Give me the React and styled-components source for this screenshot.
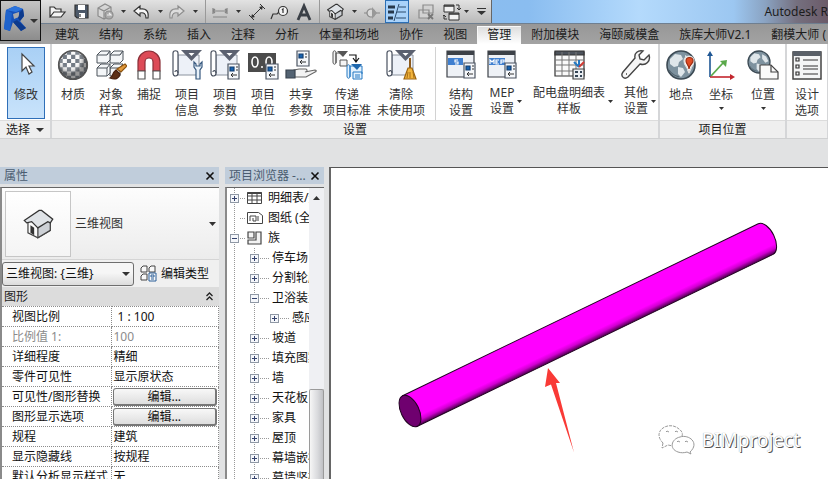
import React from "react";
import styled, { createGlobalStyle, css } from "styled-components";

const GlobalStyle = createGlobalStyle`
  *, *::before, *::after { box-sizing: border-box; }
  body {
    margin: 0;
    overflow: hidden;
    background: #e1e2e3;
    color: #1c1c1c;
    font: 12px/16px "Noto Sans", "Noto Sans CJK SC", sans-serif;
  }
  button, select {
    margin: 0;
    padding: 0;
    border: 0;
    background: none;
    color: inherit;
    font: inherit;
  }
  svg { display: block; flex: none; }
`;

/* ---------- shell ---------- */

const Window = styled.div`
  display: flex;
  flex-direction: column;
  height: 100vh;
  overflow: hidden;
`;

const Header = styled.header`
  display: flex;
  flex: none;
  background: #9b9b9b;
`;

const AppButton = styled.button`
  display: flex;
  align-items: center;
  justify-content: center;
  gap: 2px;
  flex: none;
  width: 41px;
  height: 41px;
  border: 1px solid #111;
  background: linear-gradient(#c4c4c4, #8c8c8c);
`;

const HeaderRows = styled.div`
  flex: 1;
  min-width: 0;
`;

const TitleBar = styled.div`
  display: flex;
  height: 24px;
  border-bottom: 1px solid #6f7f90;
  background: linear-gradient(90deg, #8cbce9 0, #8abdf0 62%, #b4dafc 76%, #9cc7f1 88%, #8aa3c2 92%, #75707f 96%, #6b5a68 100%);
`;

const QuickAccess = styled.div`
  display: flex;
  flex: none;
  padding-left: 4px;
  border-right: 1px solid #666;
  background: linear-gradient(#e2e2e2, #b9b9b9);
`;

const QuickButton = styled.button`
  display: flex;
  align-items: center;
  justify-content: center;
  flex: none;
  width: ${(p) => p.$w}px;
  ${(p) =>
    p.$active &&
    css`
      border: 1px solid #2c6fb5;
      background: #a9d2fa;
    `}
`;

const QuickSeparator = styled.span`
  flex: none;
  width: ${(p) => p.$w}px;
  background: linear-gradient(#999, #999) center / 1px 100% no-repeat;
`;

const AppTitle = styled.div`
  flex: 1;
  padding: 4px 0 0;
  text-align: right;
  white-space: nowrap;
`;

const TabBar = styled.nav`
  display: flex;
  height: 20px;
  padding: 2px 0 0 4px;
  overflow: hidden;
  background: linear-gradient(#979797, #a3a3a3);
`;

const Tab = styled.button`
  flex: none;
  height: 18px;
  padding: 0 10px;
  line-height: 18px;
  white-space: nowrap;
  ${(p) =>
    p.$active &&
    css`
      background: linear-gradient(#dcdcdc, #fff);
      box-shadow: inset 1px 1px #f8f8f8;
    `}
`;

/* ---------- ribbon ---------- */

const Ribbon = styled.section`
  display: flex;
  flex: none;
  overflow: hidden;
  border-bottom: 1px solid #cfd0d1;
  background: #fff;
`;

const RibbonPanel = styled.section`
  display: flex;
  flex-direction: column;
  flex: none;
  border-right: 2px solid #d5d6d8;
`;

const RibbonTools = styled.div`
  display: flex;
  height: 76px;
  padding: 3px ${(p) => p.$end || 0}px 0 ${(p) => p.$start || 0}px;
`;

const RibbonFooter = styled.div`
  display: flex;
  align-items: center;
  justify-content: center;
  gap: 6px;
  height: 18px;
  border-top: 1px solid #dcdcdc;
  background: #efefef;
`;

const Tool = styled.button`
  display: flex;
  flex-direction: column;
  align-items: center;
  flex: none;
  width: ${(p) => p.$w || 38}px;
  height: 72px;
  padding-top: 2px;
  white-space: nowrap;
  color: #333;
  ${(p) =>
    p.$active &&
    css`
      border: 1px solid #2f6fb8;
      background: linear-gradient(#a9d0f5, #c9e3fb);
      padding-top: 1px;
    `}
`;

const ToolLabel = styled.span`
  display: flex;
  align-items: center;
  gap: 3px;
  padding: ${(p) => (p.$side ? "4px 0 0 8px" : "6px 0 0")};
  text-align: center;
`;

const ToolCaret = styled.span`
  padding-top: 4px;
`;

const ToolDivider = styled.span`
  flex: none;
  width: 14px;
  background: linear-gradient(#d2d2d2, #d2d2d2) center / 1px 100% no-repeat;
`;

/* ---------- work area ---------- */

const WorkArea = styled.main`
  display: flex;
  flex: 1;
  min-height: 0;
  padding-top: 28px;
`;

const Palette = styled.section`
  display: flex;
  flex-direction: column;
  flex: none;
  width: ${(p) => p.$w}px;
  margin-right: ${(p) => p.$gap}px;
`;

const PaletteHeader = styled.header`
  display: flex;
  align-items: center;
  justify-content: space-between;
  flex: none;
  height: 17px;
  margin-bottom: 3px;
  padding: 0 4px;
  background: #c0cddb;
  color: #4b5c70;
  white-space: nowrap;
`;

const PaletteBody = styled.div`
  display: flex;
  flex-direction: ${(p) => (p.$row ? "row" : "column")};
  flex: 1;
  min-height: 0;
  overflow: hidden;
  border-top: 1px solid #666;
  border-left: 2px solid #8a8a8a;
  background: ${(p) => (p.$row ? "#fff" : "#f0f0f0")};
`;

const TypeSelector = styled.button`
  display: flex;
  align-items: center;
  gap: 4px;
  flex: none;
  height: 72px;
  padding: 3px;
  border-bottom: 1px solid #d5d5d5;
  background: linear-gradient(#fdfdfd, #ececec);
  color: #333;
  text-align: left;
`;

const TypePreview = styled.span`
  display: flex;
  align-items: center;
  justify-content: center;
  width: 66px;
  height: 66px;
  border: 1px solid #c6c6c6;
  background: linear-gradient(#fff, #f4f4f4);
`;

const TypeName = styled.span`
  flex: 1;
`;

const InstanceRow = styled.div`
  display: flex;
  align-items: center;
  flex: none;
  height: 27px;
  gap: 6px;
`;

const SelectBox = styled.label`
  display: grid;
  align-items: center;
  width: 132px;

  > * { grid-area: 1 / 1; }
  > svg { justify-self: end; margin-right: 4px; pointer-events: none; }
`;

const InstanceSelect = styled.select`
  appearance: none;
  width: 100%;
  height: 24px;
  padding: 0 16px 0 3px;
  border: 1px solid #6e6e6e;
  border-radius: 3px;
  background: linear-gradient(#f6f6f6 45%, #dcdcdc);
  color: #111;
`;

const EditType = styled.button`
  display: flex;
  align-items: center;
  gap: 4px;
  color: #111;
`;

const GroupHeader = styled.button`
  display: flex;
  align-items: center;
  justify-content: space-between;
  flex: none;
  height: 19px;
  padding: 0 6px 0 2px;
  background: #dcdcdc;
`;

const PropertyTable = styled.table`
  flex: none;
  width: 100%;
  table-layout: fixed;
  border-collapse: collapse;
  background: #fff;
  color: #111;
`;

const PropertyRow = styled.tr`
  height: 20px;
  color: ${(p) => (p.$disabled ? "#8b8b8b" : "inherit")};
`;

const PropertyName = styled.th`
  width: 109px;
  padding: 0 0 0 10px;
  border: 1px dotted #8c8c8c;
  border-left: 0;
  font-weight: 400;
  line-height: 18px;
  text-align: left;
  white-space: nowrap;
`;

const PropertyValue = styled.td`
  padding: 0 1px 0 ${(p) => (p.$button ? 1 : p.$scale ? 6 : 2)}px;
  border: 1px dotted #8c8c8c;
  line-height: 18px;
  white-space: nowrap;
`;

const EditButton = styled.button`
  display: block;
  width: 100%;
  height: 18px;
  border: 1px solid #777;
  border-right-width: 2px;
  border-bottom-width: 2px;
  border-radius: 3px;
  background: linear-gradient(#f8f8f8, #dedede);
  line-height: 15px;
`;

/* ---------- project browser ---------- */

const Tree = styled.ul`
  flex: 1;
  min-width: 0;
  margin: 0;
  padding: 0;
  overflow: hidden;
  list-style: none;
`;

const TreeRow = styled.li`
  display: flex;
  align-items: center;
  height: 20px;
  white-space: nowrap;
  color: #111;
`;

const TreeCell = styled.span`
  display: flex;
  align-items: center;
  flex: none;
  width: ${(p) => (p.$last ? 12 : 20)}px;
  height: 20px;
  padding-left: 3px;
  background: ${(p) =>
    p.$line ? "repeating-linear-gradient(#999 0 1px, transparent 1px 2px) 7px 0 / 1px 100% no-repeat" : "none"};
`;

const Expander = styled.button`
  display: flex;
  align-items: center;
  justify-content: center;
  flex: none;
  width: 9px;
  height: 9px;
  border: 1px solid #8f98a5;
  background: #f5f7fb;
`;

const TreeLead = styled.span`
  display: flex;
  align-items: center;
  flex: none;
  width: ${(p) => (p.$icon ? 29 : 13)}px;
  height: 20px;
  padding-left: 8px;
  background: repeating-linear-gradient(90deg, transparent 0 1px, #999 1px 2px) 0 center /
    ${(p) => (p.$icon ? 6 : 10)}px 1px no-repeat;
`;

const ScrollTrack = styled.div`
  display: flex;
  flex-direction: column;
  flex: none;
  width: 15px;
  background: #eff0f3;
`;

const ScrollUp = styled.button`
  display: flex;
  align-items: center;
  justify-content: center;
  height: 20px;
`;

const ScrollSpace = styled.div`
  flex: 67;
`;

const ScrollThumb = styled.div`
  flex: 33;
  border: 1px solid #9a9a9a;
  border-bottom: 0;
  border-radius: 2px 2px 0 0;
  background: linear-gradient(90deg, #f6f6f6, #d8d9dc 60%, #bfc0c4);
`;

/* ---------- 3D view ---------- */

const Viewport = styled.section`
  position: relative;
  flex: 1;
  min-width: 0;
  border-top: 1px solid #555;
  border-left: 2px solid #666;
  background: #fff;

  > svg { width: 100%; height: 100%; }
`;

const Watermark = styled.div`
  position: absolute;
  right: 28px;
  bottom: 23px;
  display: flex;
  align-items: center;
  gap: 7px;
  color: #fff;
  font-size: 19px;
  line-height: 32px;
  text-shadow: 1px 1px 0 #555, 0 0 1px #888;
`;

/* ---------- small glyphs ---------- */

const Caret = ({ size = 7, up }) => (
  <svg width={size} height={size > 5 ? 4 : 3} viewBox="0 0 8 4" preserveAspectRatio="none" aria-hidden="true">
    <path d={up ? "M0 4h8L4 0z" : "M0 0h8L4 4z"} fill="#333" />
  </svg>
);

const Close = () => (
  <button aria-label="关闭">
    <svg width="10" height="10" viewBox="0 0 10 10">
      <path d="M1.5 1.5l7 7M8.500 1.5l-7 7" stroke="#111" strokeWidth="1.6" />
    </svg>
  </button>
);

const Icon = ({ s = 20, children }) => (
  <svg width={s} height={s} viewBox={`0 0 ${s} ${s}`} fill="none" stroke="#333" strokeWidth="1.2" aria-hidden="true">
    {children}
  </svg>
);

const Logo = () => (
  <svg width="24" height="29" viewBox="0 0 24 29" aria-hidden="true">
    <path d="M2 4L11 0l8 3 1 7-4 5 6 7-5 3-8-9-3 9-6-2z" fill="#1650b8" />
    <path d="M2 4l9-4 8 3-7 3z" fill="#2c74dc" />
    <path d="M9 8l6-2v5l-5 2z" fill="#a9a9ab" />
    <path d="M2 4l6 3-2 18-6-2z" fill="#1f63cc" />
    <path d="M19 3l1 7-4 5-2-3 2-6zM13 14l9 8-5 3-8-9z" fill="#0d3a8c" />
  </svg>
);

const HouseShape = () => (
  <>
    <path d="M4 11v9l8 4 10-6v-8l-7-6z" fill="#fafafa" stroke="#444" />
    <path d="M12 14v10l10-6v-8z" fill="#cdd1d6" stroke="#444" />
    <path d="M1 10L13 2h2l9 7-2 3-2-1-8 5-5-5-4 1z" fill="#dfe3e7" stroke="#333" />
    <path d="M6 14v6l3 2v-6z" fill="#333" stroke="none" />
  </>
);

/* ---------- quick access icons ---------- */

const quick = {
  folder: (
    <Icon>
      <path d="M3 15V5h4l2 2h5v3M3 15l4-5h11l-4 5z" fill="#f4f4f4" />
    </Icon>
  ),
  save: (
    <Icon>
      <path d="M3 3h13v13H5l-2-2z" fill="#4c5868" />
      <path d="M6 3h7v5H6zM7 11h6v5H7z" fill="#fff" stroke="none" />
      <path d="M8 12v3" />
    </Icon>
  ),
  sync: (
    <Icon>
      <g stroke="#8b8b8b" fill="#d6d6d6">
        <path d="M2 6l7-4 6 3v8l-7 4-6-3zM2 6l6 3 7-4M8 9v8" />
        <circle cx="13" cy="13" r="4" fill="#aaa" />
        <path d="M11 13h4l-2-2" fill="none" stroke="#eee" />
      </g>
    </Icon>
  ),
  undo: (
    <Icon>
      <path d="M2 9l6-5v3c6-1 9 2 8 9h-2c0-4-2-6-6-5v3z" fill="#f7f7f7" />
    </Icon>
  ),
  redo: (
    <Icon>
      <path d="M17 9l-6-5v3c-6-1-9 2-8 9h2c0-4 2-6 6-5v3z" fill="#ddd" stroke="#8d8d8d" />
    </Icon>
  ),
  measure: (
    <Icon>
      <path d="M3 9h14M3 6v6M17 6v6M5 7L3 9l2 2M15 7l2 2-2 2M3 15h14" stroke="#858585" />
    </Icon>
  ),
  dimension: (
    <Icon>
      <path d="M5 15L15 5M2 13l5 5M13 2l5 5" strokeWidth="1" />
      <path d="M4 16l1-4 3 3zM16 4l-1 4-3-3z" fill="#333" stroke="none" />
    </Icon>
  ),
  tag: (
    <Icon>
      <path d="M1 17l2-5h4l2-2" />
      <circle cx="13" cy="9" r="4.500" fill="#f3f3f3" />
      <path d="M12 8l1-1v4" />
    </Icon>
  ),
  text: (
    <Icon>
      <path d="M4 18L10 4l6 14M6 13h8" stroke="#3a3f46" strokeWidth="2.800" />
    </Icon>
  ),
  house: (
    <svg width="17" height="17" viewBox="0 0 25 25" fill="none" strokeWidth="1.6" aria-hidden="true">
      <HouseShape />
    </svg>
  ),
  section: (
    <Icon>
      <path d="M2 11h4M14 11h4" stroke="#888" />
      <circle cx="9" cy="11" r="4" fill="#d9d9d9" stroke="#888" />
      <path d="M10 5l5 6-5 6z" fill="#999" stroke="none" />
    </Icon>
  ),
  thin: (
    <Icon>
      <path d="M1 5h7M1 10h6M1 16h5" strokeWidth="3" stroke="#27384c" />
      <path d="M12 5h7M10 10h9M9 16h10M12 2L7 19" stroke="#2a4a6c" strokeWidth="1" />
    </Icon>
  ),
  hidden: (
    <Icon>
      <path d="M7 3h10v8H7zM3 8h10v8H3z" fill="#d2d2d2" stroke="#8b8b8b" />
      <path d="M12 12l5 5M17 12l-5 5" stroke="#777" strokeWidth="1.8" />
    </Icon>
  ),
  windows: (
    <Icon>
      <path d="M2 3h10v7H2zM7 11h10v7H7z" fill="#f2f2f2" strokeWidth="1" />
      <path d="M2 4h10M7 12h10" strokeWidth="1.6" />
      <path d="M14 3h3v5M15 6l2 2 2-2M5 17H2v-4M1 14l1-1 2 2" strokeWidth="1" />
    </Icon>
  ),
  customize: (
    <svg width="9" height="7" viewBox="0 0 9 7" aria-hidden="true">
      <path d="M0 0h9v1H0zM0 3h9L4.500 7z" fill="#333" />
    </svg>
  ),
};

const quickItems = [
  ["folder", 24, "打开"],
  ["save", 26, "保存"],
  ["sync", 22, "同步"],
  ["caret", 12, "同步选项"],
  ["undo", 26, "放弃"],
  ["caret", 10, "放弃列表"],
  ["redo", 24, "重做"],
  ["caret", 12, "重做列表"],
  ["sep", 8],
  ["measure", 22, "测量"],
  ["caret", 14, "测量选项"],
  ["dimension", 24, "对齐尺寸标注"],
  ["tag", 22, "按类别标记"],
  ["text", 26, "文字"],
  ["sep", 4],
  ["house", 28, "默认三维视图"],
  ["caret", 10, "三维视图选项"],
  ["section", 26, "剖面"],
  ["thin", 24, "细线"],
  ["hidden", 34, "关闭隐藏窗口"],
  ["windows", 18, "切换窗口"],
  ["caret", 10, "窗口列表"],
  ["customize", 20, "自定义快速访问工具栏"],
];

/* ---------- ribbon icons ---------- */

const Scroll = () => (
  <>
    <path d="M7 6h21v20H7z" fill="#edf1f8" stroke="#8a929e" strokeWidth="1" />
    <path d="M2 4c0-3 5-3 5 0v20c0 4-5 4-5 0z" fill="#fff" stroke="#4a5260" />
    <path d="M7 24c0-3-3-3-3-1" stroke="#4a5260" />
    <path d="M10 1h21L20.500 12z" fill="#5b6170" stroke="none" />
    <path d="M17.500 4h6l-3 3z" fill="#fff" stroke="none" />
  </>
);

const Card = ({ x = 19, y = 15, w = 11, h = 15 }) => (
  <g transform={`translate(${x} ${y})`}>
    <path d={`M0 0h${w}v${h}H0z`} fill="#f5f7fa" stroke="#4c5563" />
    <path d="M2 3h4v4H2z" fill="#1662b0" stroke="#143f70" />
    <path d="M8 3h2M8 6h2" stroke="#333" />
    <path d="M3 11h6M5 9l-2 2 2 2" stroke="#333" strokeWidth="1" />
  </g>
);

const Globe = ({ cx = 16, cy = 16, r = 14 }) => (
  <g transform={`translate(${cx} ${cy}) scale(${r / 14})`}>
    <circle r="14" fill="#7e929f" stroke="#3c4a54" strokeWidth="1.6" />
    <path d="M-11-6l5-5 6 1 2 4-4 3-1 4-4 1-4-3zM-3 2l5 1 2 4-4 5-3-3zM4-10l5 3 3 6-4 2-4-5zM6 5l5-2-3 6z" fill="#dfe6ea" stroke="none" />
    <path d="M-12 5c4 6 8 6 10 7" stroke="#52646f" />
  </g>
);

const checks = [];
for (let r = 0; r < 7; r += 1) {
  for (let c = 0; c < 7; c += 1) {
    if ((r + c) % 2 === 0) checks.push(`M${1.5 + c * 4.2} ${1.5 + r * 4.2}h4.200v4.200h-4.200z`);
  }
}

const Grid = () => (
  <>
    <path d="M2 3h29v24H2z" fill="#fafafa" />
    <path d="M2 2h29v4H2z" fill="#4c525b" />
    <path d="M2 11h29M2 16h29M2 22h29M9 3v24M16 3v24M23 3v24" stroke="#777" strokeWidth="1" />
  </>
);

const ViewWindow = ({ w, children }) => (
  <>
    <path d="M2 2h27v26H2z" fill="#eef1f6" stroke="#3c4148" />
    <path d="M2 2h27v4H2z" fill="#3c4148" stroke="none" />
    <path d={`M3 9h${w}v7H3z`} fill="#3f7fd0" stroke="none" />
    <g stroke="#fff" strokeWidth="1.2">{children}</g>
    <Card x={19} y={14} w={11} h={15} />
  </>
);

const tool = {
  modify: <path d="M12 5v17l4-4 3 7 3-2-3-6h5z" fill="#fff" stroke="#444" />,
  material: (
    <>
      <defs>
        <clipPath id="ball"><circle cx="16" cy="16" r="14" /></clipPath>
        <radialGradient id="shade" cx=".4" cy=".3"><stop offset=".5" stopColor="#fff" stopOpacity="0" /><stop offset="1" stopColor="#333" stopOpacity=".5" /></radialGradient>
      </defs>
      <circle cx="16" cy="16" r="14" fill="#fafafa" />
      <g clipPath="url(#ball)"><path d={checks.join("")} fill="#737b85" stroke="none" /></g>
      <circle cx="16" cy="16" r="14.500" fill="url(#shade)" stroke="#555" />
    </>
  ),
  styles: (
    <>
      <g fill="#f4f6f8" stroke="#4b525b" strokeWidth="1">
        <path d="M2 6l4-4h9l-3 4v8H2zM15 6l4-4h9l-3 4v8H15z" />
        <path d="M2 19l4-4h9l-3 4v8H2zM15 19l4-4h9l-3 4v8H15z" />
        <path d="M2 6h10l3-4v9l-3 3M15 6h10l3-4v9l-3 3M2 19h10M12 27l3-3v-9M15 19h10" />
      </g>
      <path d="M30 15l2 2-6 6-4-3z" fill="#e29a3c" stroke="#8c5310" />
      <path d="M21 21l4 4c-1 5-5 6-10 4 3-1 2-5 6-8z" fill="#5d2f17" stroke="#472010" />
    </>
  ),
  snap: (
    <>
      <path d="M5 22V13a11 11 0 0122 0v9h-7v-9a4 4 0 00-8 0v9z" fill="#dd4b57" stroke="#8a2f38" />
      <path d="M5 22h7v8H5zM20 22h7v8h-7z" fill="#fff" stroke="#555" />
    </>
  ),
  info: (
    <>
      <Scroll />
      <path d="M23 13v5l2 3v9h4v-9l2-3v-5l-2 2v2h-4v-2z" fill="#e9f2fb" stroke="#36587e" />
    </>
  ),
  params: (<><Scroll /><Card /></>),
  units: (
    <>
      <path d="M1 4h28v19H1z" fill="#4b4b4b" stroke="none" />
      <g stroke="#fff" strokeWidth="1.6"><ellipse cx="8" cy="13" rx="3" ry="5" /><path d="M14 18h2" /><ellipse cx="22" cy="13" rx="3" ry="5" /></g>
      <Card x={19} y={15} w={12} h={15} />
    </>
  ),
  shared: (
    <>
      <Card x={12} y={2} w={12} h={15} />
      <path d="M9 21l5-1h7c2 1 1 3-1 3l10-2c2 0 1 2 0 2l-9 5H9z" fill="#f3f3f3" stroke="#666" />
      <path d="M1 21h9v8H1z" fill="#536272" stroke="#39434f" />
    </>
  ),
  transfer: (
    <>
      <path d="M2 4c0-3 3-3 3 0v9c0 3-3 3-3 0zM5 14V4h10M9 11h7v6H9z" fill="#f4f4f4" stroke="#555" strokeWidth="1" />
      <path d="M6 2h11l-5 6z" fill="#555" stroke="none" />
      <path d="M18 6h7v6M22 9l3 4 3-4" stroke="#111" />
      <g stroke="#2478c2" fill="#e3f1fd" strokeWidth="1"><path d="M16 18c0-3 3-3 3 0v9c0 3-3 3-3 0zM19 28V17h12v8M22 23h9v7h-9z" /><path d="M24 26h5M24 28h5" /></g>
      <path d="M20 15h11l-5 6z" fill="#1d66ad" stroke="none" />
    </>
  ),
  purge: (
    <>
      <Scroll />
      <path d="M25 9v10" stroke="#8b5a1e" strokeWidth="2" />
      <path d="M23 19h4l4 11H19z" fill="#f2b53c" stroke="#9c6512" />
      <path d="M23 23l-1 6M25 23v6M28 23l1 6" stroke="#a96f17" strokeWidth="1" />
    </>
  ),
  structure: <ViewWindow w={15}><path d="M13 11h-3v2h3v2h-3" /></ViewWindow>,
  mep: <ViewWindow w={16}><path d="M4 15v-4l2 2 2-2v4M13 11h-3v4h3M10 13h2M15 15v-4h3v2h-3" /></ViewWindow>,
  schedule: (
    <>
      <Grid />
      <path d="M21 13l5 5M26 11v7" stroke="#2478c2" strokeWidth="2" />
      <path d="M31 13l-5 5" stroke="#d23b35" strokeWidth="2" />
      <path d="M20 20h11v10H20z" fill="#eceff3" stroke="#444" />
      <path d="M22 22h3v2h-3zM27 22h2v2h-2zM22 26h3v2h-3zM27 26h2v2h-2z" fill="#345" stroke="none" />
    </>
  ),
  wrench: (
    <path d="M29 6l-5 5-4-1-1-4 4-4c-5-1-9 2-8 7L3 23c-3 4 1 8 5 5l12-13c6 2 11-3 9-9zM6 25h1" fill="#f5f5f5" stroke="#444" strokeWidth="1.4" />
  ),
  place: (
    <>
      <Globe />
      <path d="M24 24c-1-6-5-7-5-12a5 5 0 0110 0c0 5-4 6-5 12z" fill="#fff" stroke="#ddd" />
      <path d="M24 20c0-4-3-5-3-8a3.500 3.500 0 017 0c0 3-4 4-4 8z" fill="#e14c25" stroke="#9d2e13" />
    </>
  ),
  axes: (
    <>
      <path d="M5 28V5" stroke="#1f5794" strokeWidth="1.600" /><path d="M2 7l3-5 3 5z" fill="#1f5794" stroke="none" />
      <path d="M5 28h22" stroke="#c3262d" strokeWidth="1.600" /><path d="M25 25l5 3-5 3z" fill="#c3262d" stroke="none" />
      <path d="M6 27l12-13" stroke="#5ba94b" strokeWidth="1.800" /><path d="M15 12l7-1-1 7z" fill="#5ba94b" stroke="none" />
    </>
  ),
  position: (
    <>
      <Globe cx={12} cy={13} r={11} />
      <path d="M13 16h11l7 7v7H13z" fill="#fafafa" stroke="#444" />
      <path d="M24 16v7h7" stroke="#444" />
    </>
  ),
  options: (
    <>
      <path d="M2 3h28v27H2z" fill="#f4f5f6" stroke="#444" strokeWidth="1.500" />
      <path d="M2 2h28v5H2z" fill="#5a6068" stroke="none" />
      <path d="M5 9h3v3H5zM5 16h3v3H5zM5 23h3v3H5z" />
      <path d="M12 11h15M12 17h15M12 20h15M12 25h15" />
    </>
  ),
};

const settingsTools = [
  { icon: "material", lines: ["材质"] },
  { icon: "styles", lines: ["对象", "样式"] },
  { icon: "snap", lines: ["捕捉"] },
  { icon: "info", lines: ["项目", "信息"] },
  { icon: "params", lines: ["项目", "参数"] },
  { icon: "units", lines: ["项目", "单位"] },
  { icon: "shared", lines: ["共享", "参数"] },
  { icon: "transfer", lines: ["传递", "项目标准"], w: 54 },
  { icon: "purge", lines: ["清除", "未使用项"], w: 54 },
  { divider: true },
  { icon: "structure", lines: ["结构", "设置"] },
  { icon: "mep", lines: ["MEP", "设置"], w: 44, caret: "side" },
  { icon: "schedule", lines: ["配电盘明细表", "样板"], w: 90, caret: "side" },
  { icon: "wrench", lines: ["其他", "设置"], w: 44, caret: "side" },
];

const locationTools = [
  { icon: "place", lines: ["地点"], w: 40 },
  { icon: "axes", lines: ["坐标"], w: 40, caret: "below" },
  { icon: "position", lines: ["位置"], w: 44, caret: "below" },
];

const RibbonTool = ({ icon, lines, w, caret, active }) => (
  <Tool $w={w} $active={active}>
    <Icon s={32}>{tool[icon]}</Icon>
    <ToolLabel $side={caret === "side"}>
      <span>
        {lines.map((line, i) => (
          <React.Fragment key={line}>
            {i > 0 && <br />}
            {line}
          </React.Fragment>
        ))}
      </span>
      {caret === "side" && <Caret size={5} />}
    </ToolLabel>
    {caret === "below" && <ToolCaret><Caret size={5} /></ToolCaret>}
  </Tool>
);

/* ---------- data ---------- */

const tabs = ["建筑", "结构", "系统", "插入", "注释", "分析", "体量和场地", "协作", "视图", "管理", "附加模块", "海颐威模盒", "族库大师V2.1", "翻模大师 ("];

const properties = [
  { name: "视图比例", value: "1 : 100", scale: true },
  { name: "比例值 1:", value: "100", disabled: true },
  { name: "详细程度", value: "精细" },
  { name: "零件可见性", value: "显示原状态" },
  { name: "可见性/图形替换", button: "编辑..." },
  { name: "图形显示选项", button: "编辑..." },
  { name: "规程", value: "建筑" },
  { name: "显示隐藏线", value: "按规程" },
  { name: "默认分析显示样式", value: "无" },
];

const treeIcons = {
  schedule: (
    <svg width="16" height="14" viewBox="0 0 16 14" fill="#fff" stroke="#444" aria-hidden="true">
      <path d="M.5 1.500h14v11H.5zM.5 5h14M.5 9h14M5 1v11M10 1v11" />
      <path d="M.5 2h14" strokeWidth="2" />
    </svg>
  ),
  sheet: (
    <svg width="16" height="14" viewBox="0 0 16 14" fill="#fff" stroke="#444" aria-hidden="true">
      <path d="M.5 1.500h11l4 3v8H.5z" />
      <path d="M3 10V5h6v5H6V7M11 5v5" />
    </svg>
  ),
  family: (
    <svg width="16" height="14" viewBox="0 0 16 14" fill="#f3f3f3" stroke="#444" strokeWidth="1.200" aria-hidden="true">
      <path d="M1 1h6v6H1zM9 1h5v12H1V9h8z" />
    </svg>
  ),
};

const treeItems = [
  { level: 0, state: "+", icon: "schedule", label: "明细表/数量" },
  { level: 0, icon: "sheet", label: "图纸 (全部)" },
  { level: 0, state: "-", icon: "family", label: "族" },
  { level: 1, state: "+", label: "停车场" },
  { level: 1, state: "+", label: "分割轮廓" },
  { level: 1, state: "-", label: "卫浴装置" },
  { level: 2, state: "+", label: "感应" },
  { level: 1, state: "+", label: "坡道" },
  { level: 1, state: "+", label: "填充图案" },
  { level: 1, state: "+", label: "墙" },
  { level: 1, state: "+", label: "天花板" },
  { level: 1, state: "+", label: "家具" },
  { level: 1, state: "+", label: "屋顶" },
  { level: 1, state: "+", label: "幕墙嵌板" },
  { level: 1, state: "+", label: "幕墙竖梃" },
];

const TreeItem = ({ level, state, icon, label }) => (
  <TreeRow>
    {Array.from({ length: level }, (_, i) => <TreeCell key={i} $line />)}
    <TreeCell $line={level < 2} $last>
      {state && (
        <Expander aria-label={`${state === "+" ? "展开" : "折叠"} ${label}`}>
          <svg width="5" height="5" viewBox="0 0 5 5">
            <path d={state === "+" ? "M0 2h5v1H0zM2 0h1v5H2z" : "M0 2h5v1H0z"} fill="#33406b" />
          </svg>
        </Expander>
      )}
    </TreeCell>
    <TreeLead $icon={icon}>{icon && treeIcons[icon]}</TreeLead>
    {label}
  </TreeRow>
);

const Pipe = () => (
  <svg viewBox="331 168 497 311" role="img" aria-label="三维管道">
    <defs>
      <linearGradient id="pipe" x1="0" y1="0" x2="0" y2="1">
        <stop offset=".74" stopColor="#ff00ff" />
        <stop offset=".86" stopColor="#d000d0" />
        <stop offset="1" stopColor="#480048" />
      </linearGradient>
    </defs>
    <g transform="translate(410 411) rotate(-25.800)" stroke="#200020" strokeWidth="1">
      <path d="M0-17H395A9 17 0 01395 17H0z" fill="url(#pipe)" />
      <ellipse rx="9" ry="17" fill="#6f006f" />
    </g>
    <path d="M548 368l12 15-4 0 18 69.500-23-68-6 2.500z" fill="#f93a36" />
  </svg>
);

const ChatLogo = () => (
  <svg width="37" height="32" viewBox="0 0 37 32" fill="#fff" stroke="#999" aria-hidden="true">
    <path d="M5 19C-7 7 11-4 21 5c3 2 4 5 3 7M5 19l-1 5 6-3 5 1" strokeDasharray="3 1" />
    <path d="M32 28c10-9-1-18-10-15-9 2-11 12-2 15 3 1 6 1 9 0l4 2z" />
    <path d="M8 8l1-1 2 1M17 8l1-1 2 1M19 18l1-1 2 1M27 18l1-1 2 1" />
  </svg>
);

export default function App() {
  return (
    <Window>
      <GlobalStyle />
      <Header>
        <AppButton aria-label="应用程序菜单">
          <Logo />
          <Caret size={8} />
        </AppButton>
        <HeaderRows>
          <TitleBar>
            <QuickAccess>
              {quickItems.map(([kind, w, label], i) =>
                kind === "sep" ? (
                  <QuickSeparator key={i} $w={w} />
                ) : (
                  <QuickButton key={i} $w={w} $active={kind === "thin"} aria-label={label}>
                    {kind === "caret" ? <Caret size={5} /> : quick[kind]}
                  </QuickButton>
                )
              )}
            </QuickAccess>
            <AppTitle>Autodesk R</AppTitle>
          </TitleBar>
          <TabBar>
            {tabs.map((t) => <Tab key={t} $active={t === "管理"}>{t}</Tab>)}
          </TabBar>
        </HeaderRows>
      </Header>

      <Ribbon>
        <RibbonPanel>
          <RibbonTools $start={7} $end={5}>
            <RibbonTool icon="modify" lines={["修改"]} active />
          </RibbonTools>
          <RibbonFooter>选择 <Caret size={8} /></RibbonFooter>
        </RibbonPanel>
        <RibbonPanel>
          <RibbonTools $start={2}>
            {settingsTools.map((t, i) => (t.divider ? <ToolDivider key={i} /> : <RibbonTool key={i} {...t} />))}
          </RibbonTools>
          <RibbonFooter>设置</RibbonFooter>
        </RibbonPanel>
        <RibbonPanel>
          <RibbonTools $start={1}>
            {locationTools.map((t) => <RibbonTool key={t.icon} {...t} />)}
          </RibbonTools>
          <RibbonFooter>项目位置</RibbonFooter>
        </RibbonPanel>
        <RibbonPanel>
          <RibbonTools>
            <RibbonTool icon="options" lines={["设计", "选项"]} w={40} />
          </RibbonTools>
          <RibbonFooter />
        </RibbonPanel>
      </Ribbon>

      <WorkArea>
        <Palette $w={219} $gap={6}>
          <PaletteHeader>属性 <Close /></PaletteHeader>
          <PaletteBody>
            <TypeSelector>
              <TypePreview>
                <svg width="31" height="31" viewBox="0 0 25 25" fill="none" strokeWidth="1" aria-hidden="true">
                  <HouseShape />
                </svg>
              </TypePreview>
              <TypeName>三维视图</TypeName>
              <Caret />
            </TypeSelector>
            <InstanceRow>
              <SelectBox>
                <InstanceSelect aria-label="视图实例" defaultValue="3d">
                  <option value="3d">三维视图: {"{三维}"}</option>
                </InstanceSelect>
                <Caret size={8} />
              </SelectBox>
              <EditType>
                <svg width="17" height="17" viewBox="0 0 17 17" fill="#f8f8f8" stroke="#444" aria-hidden="true">
                  <path d="M1 3l2-2h4v6H1zM9 3l2-2h4v6H9zM1 11l2-2h4v6H1z" />
                  <path d="M9 8h7v8H9zM11 10h3v2h-3zM11 14h3" stroke="#2b5f98" />
                </svg>
                编辑类型
              </EditType>
            </InstanceRow>
            <GroupHeader>
              图形
              <svg width="7" height="9" viewBox="0 0 7 9" fill="none" stroke="#222" strokeWidth="1.300" aria-hidden="true">
                <path d="M.5 4l3-3 3 3M.5 8l3-3 3 3" />
              </svg>
            </GroupHeader>
            <PropertyTable>
              <tbody>
                {properties.map((p) => (
                  <PropertyRow key={p.name} $disabled={p.disabled}>
                    <PropertyName scope="row">{p.name}</PropertyName>
                    <PropertyValue $button={p.button} $scale={p.scale}>
                      {p.button ? <EditButton aria-label={`${p.button} ${p.name}`}>{p.button}</EditButton> : p.value}
                    </PropertyValue>
                  </PropertyRow>
                ))}
              </tbody>
            </PropertyTable>
          </PaletteBody>
        </Palette>

        <Palette $w={99} $gap={5}>
          <PaletteHeader>项目浏览器 -... <Close /></PaletteHeader>
          <PaletteBody $row>
            <Tree>
              {treeItems.map((item) => <TreeItem key={item.label} {...item} />)}
            </Tree>
            <ScrollTrack>
              <ScrollUp aria-label="向上滚动"><Caret size={7} up /></ScrollUp>
              <ScrollSpace />
              <ScrollThumb />
            </ScrollTrack>
          </PaletteBody>
        </Palette>

        <Viewport>
          <Pipe />
          <Watermark><ChatLogo />BIMproject</Watermark>
        </Viewport>
      </WorkArea>
    </Window>
  );
}
